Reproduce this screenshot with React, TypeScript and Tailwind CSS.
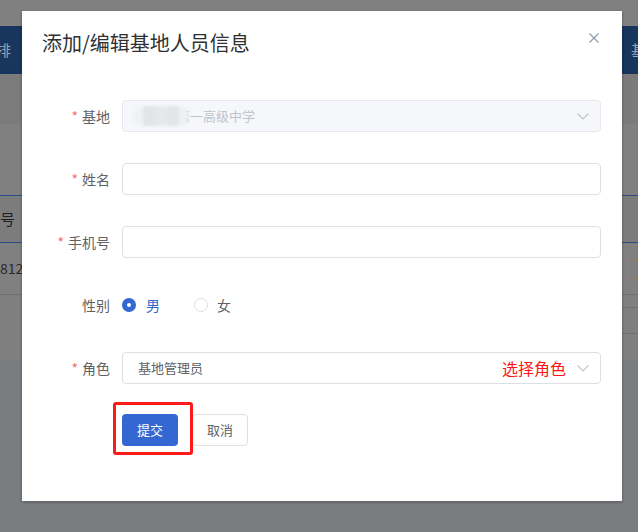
import React from "react";

const font = { fontFamily: '"Microsoft YaHei", "Noto Sans CJK SC", "Noto Sans", sans-serif' };

function Chevron() {
  return (
    <svg width="12" height="7" viewBox="0 0 12 7" fill="none">
      <path d="M0.5 0.5 L6 6 L11.5 0.5" stroke="#c0c4cc" strokeWidth="1.1" />
    </svg>
  );
}

function Label({ text, required }: { text: string; required?: boolean }) {
  return (
    <div className="w-[100px] shrink-0 pr-[12px] flex items-center justify-end text-[14px] leading-[32px] text-[#606266]">
      {required && <span className="text-[#f56c6c] mr-[4px]">*</span>}
      <span>{text}</span>
    </div>
  );
}

export default function App() {
  return (
    <div className="relative w-[638px] h-[532px] overflow-hidden bg-[#7a7d80]" style={font}>
      {/* background page (under overlay) */}
      <div className="flex flex-col">
        <div className="h-[26px] bg-[#808080]" />
        <div className="h-[48px] bg-[#17355d] flex items-center justify-between text-[15px] text-[#9aa3b0]">
          <span className="-ml-[4px]">排</span>
          <span className="-mr-[8px]">基</span>
        </div>
        <div className="h-[50px] bg-[#7b7b7b]" />
        <div className="h-[71px] bg-[#808080]" />
        <div className="h-[1px] bg-[#2a4a86]" />
        <div className="h-[46px] bg-[#7c7c7c] flex items-center text-[15px] text-[#1e1e1e]">
          <span>号</span>
        </div>
        <div className="h-[1px] bg-[#2a4a86]" />
        <div className="h-[51px] bg-[#808080] flex items-center justify-between text-[14px] text-[#2a2a2a]">
          <span>812</span>
          <span className="w-[14px] h-[20px] border border-[#9a7a4a] rounded-[3px] -mr-[7px]" />
        </div>
        <div className="h-[1px] bg-[#6f6f6f]" />
        <div className="h-[65px] bg-[#7f7f7f] flex justify-end">
          <div className="w-[20px] flex flex-col">
            <div className="h-[12px]" />
            <div className="h-[1px] bg-[#6f6f6f]" />
            <div className="h-[25px]" />
            <div className="h-[1px] bg-[#6f6f6f]" />
          </div>
        </div>
      </div>

      {/* dialog */}
      <div className="absolute left-[22px] top-[11px] w-[600px] h-[490px] bg-white shadow-[0_1px_3px_rgba(0,0,0,0.3)]">
        <div className="pt-[20px] pl-[20px] text-[20px] leading-[24px] text-[#303133]">添加/编辑基地人员信息</div>
        <button className="absolute right-[23px] top-[22px] w-[10px] h-[10px]">
          <svg width="10" height="10" viewBox="0 0 10 10">
            <path d="M0.5 0.5 L9.5 9.5 M9.5 0.5 L0.5 9.5" stroke="#8e9bb0" strokeWidth="1.2" />
          </svg>
        </button>

        <div className="pt-[45px] pr-[21px] flex flex-col gap-[31px]">
          <div className="flex">
            <Label text="基地" required />
            <div className="relative flex-1 h-[32px] rounded-[4px] border border-[#e4e7ed] bg-[#f5f7fa] flex items-center pl-[15px] pr-[11px]">
              <span className="flex-1 text-[13px] text-[#c0c4cc] whitespace-nowrap">某某市第一高级中学</span>
              <Chevron />
              <div className="absolute left-[10px] top-[5px] w-[56px] h-[20px] rounded-full bg-[#eceef2] blur-[1.5px] flex overflow-hidden">
                <div className="w-[10px] bg-[#f0f1f4]" />
                <div className="w-[12px] bg-[#e2e4e8]" />
                <div className="w-[12px] bg-[#e6e8eb]" />
                <div className="w-[12px] bg-[#e3e5e9]" />
                <div className="w-[10px] bg-[#eef0f3]" />
              </div>
            </div>
          </div>

          <div className="flex">
            <Label text="姓名" required />
            <div className="flex-1 h-[32px] rounded-[4px] border border-[#dcdfe6] bg-white" />
          </div>

          <div className="flex">
            <Label text="手机号" required />
            <div className="flex-1 h-[32px] rounded-[4px] border border-[#dcdfe6] bg-white" />
          </div>

          <div className="flex">
            <Label text="性别" />
            <div className="flex items-center h-[32px] text-[14px]">
              <span className="w-[14px] h-[14px] rounded-full bg-[#3467d1] flex items-center justify-center">
                <span className="w-[4px] h-[4px] rounded-full bg-white" />
              </span>
              <span className="ml-[10px] text-[#3467d1]">男</span>
              <span className="ml-[34px] w-[14px] h-[14px] rounded-full border border-[#dcdfe6] bg-white" />
              <span className="ml-[9px] text-[#606266]">女</span>
            </div>
          </div>

          <div className="flex">
            <Label text="角色" required />
            <div className="flex-1 h-[32px] rounded-[4px] border border-[#dcdfe6] bg-white flex items-center pl-[15px] pr-[11px]">
              <span className="flex-1 text-[13px] text-[#606266]">基地管理员</span>
              <span className="text-[16px] text-[#ff1414] mr-[11px]">选择角色</span>
              <Chevron />
            </div>
          </div>
        </div>

        <div className="mt-[30px] pl-[100px] flex">
          <div className="relative">
            <button className="w-[56px] h-[32px] rounded-[4px] bg-[#3467d1] text-white text-[13px]">提交</button>
            <div className="absolute left-[-9px] top-[-12px] w-[80px] h-[53px] border-[3px] border-[#ff1a1a] rounded-[3px]" />
          </div>
          <button className="ml-[14px] w-[56px] h-[32px] rounded-[4px] border border-[#dcdfe6] bg-white text-[#606266] text-[13px]">取消</button>
        </div>
      </div>
    </div>
  );
}
